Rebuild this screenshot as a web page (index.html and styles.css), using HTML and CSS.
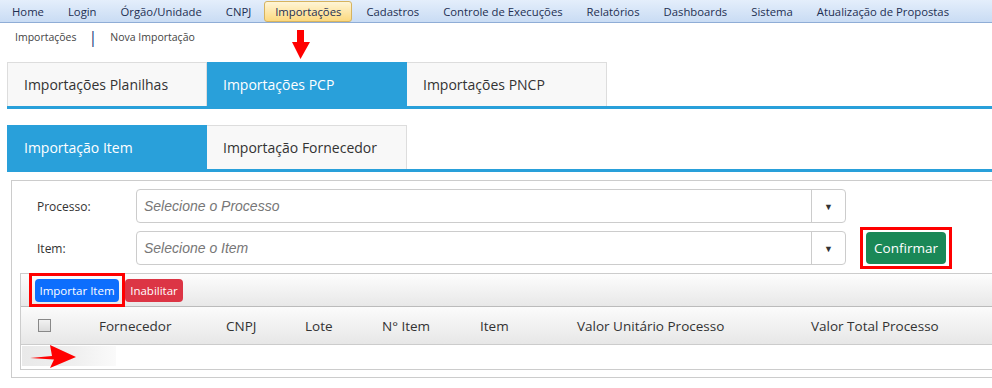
FILE: index.html
```html
<!DOCTYPE html>
<html>
<head>
  <title>Nova Importação</title>
  <link rel="stylesheet" href="styles.css">
</head>
<body>
  <nav class="menu">
    <a href="#">Home</a>
    <a href="#">Login</a>
    <a href="#">Órgão/Unidade</a>
    <a href="#">CNPJ</a>
    <a href="#" class="current">Importações</a>
    <a href="#">Cadastros</a>
    <a href="#">Controle de Execuções</a>
    <a href="#">Relatórios</a>
    <a href="#">Dashboards</a>
    <a href="#">Sistema</a>
    <a href="#">Atualização de Propostas</a>
  </nav>

  <div class="crumbs">
    <span>Importações</span>
    <span class="sep">|</span>
    <span>Nova Importação</span>
  </div>

  <div class="tabs tabs-main">
    <div class="tab">Importações Planilhas</div>
    <div class="tab active">Importações PCP</div>
    <div class="tab">Importações PNCP</div>
  </div>

  <div class="tabs tabs-sub">
    <div class="tab active">Importação Item</div>
    <div class="tab">Importação Fornecedor</div>
  </div>

  <section class="panel">
    <div class="form-row">
      <label>Processo:</label>
      <div class="select">
        <span class="placeholder">Selecione o Processo</span>
        <span class="caret">&#9660;</span>
      </div>
    </div>
    <div class="form-row">
      <label>Item:</label>
      <div class="select">
        <span class="placeholder">Selecione o Item</span>
        <span class="caret">&#9660;</span>
      </div>
      <div class="mark mark-confirm">
        <button class="btn btn-confirm">Confirmar</button>
      </div>
    </div>

    <div class="grid">
      <div class="toolbar">
        <div class="mark mark-import">
          <button class="btn btn-primary">Importar Item</button>
        </div>
        <button class="btn btn-danger">Inabilitar</button>
      </div>
      <div class="grid-head">
        <div class="cell"><span class="check"></span></div>
        <div class="cell">Fornecedor</div>
        <div class="cell">CNPJ</div>
        <div class="cell">Lote</div>
        <div class="cell">N° Item</div>
        <div class="cell">Item</div>
        <div class="cell">Valor Unitário Processo</div>
        <div class="cell">Valor Total Processo</div>
      </div>
      <div class="grid-row">
        <div class="smudge"></div>
      </div>
    </div>
  </section>

  <!-- setas de anotação por cima da tela -->
  <svg class="arrow arrow-down" width="20" height="30" viewBox="0 0 20 30">
    <polygon points="6,0 13,0 13,12 19,12 9.5,29 1,12 6,12" fill="#f00"/>
  </svg>
  <svg class="arrow arrow-right" width="48" height="24" viewBox="0 0 48 24">
    <polygon points="0,13 22,11 20,0 46,12 20,23 24,14.5" fill="#f00"/>
  </svg>
</body>
</html>
```

FILE: styles.css
```css
html, body { margin: 0; padding: 0; overflow: hidden; background: #fff; }
body { font-family: "Open Sans", "Noto Sans", sans-serif; color: #333; position: relative; width: 992px; height: 388px; }

/* menu topo */
.menu { display: flex; align-items: center; height: 22px; border-bottom: 1px solid #8fadd6;
        background: linear-gradient(#e4eefb, #c9dcf4); font-size: 11.3px; }
.menu a { color: #1e2f52; text-decoration: none; padding: 0 12px; line-height: 19px; white-space: nowrap; }
.menu a.current { padding: 0 10px; margin: 0 2px 0 1px; border: 1px solid #d6b35f; border-radius: 3px;
                  background: linear-gradient(#fff5d6, #fcd97f); }

.crumbs { display: flex; align-items: center; height: 27px; padding-left: 15px; font-size: 10.5px; color: #444; }
.crumbs .sep { color: #1f3f80; font-size: 16px; margin: 0 13px 0 12px; line-height: 16px; }

/* abas */
.tabs { display: flex; margin-left: 7px; border-bottom: 3px solid #29a0da; }
.tabs-main { margin-top: 12px; }
.tabs-sub { margin-top: 16px; }
.tab { box-sizing: border-box; width: 200px; height: 44px; padding-left: 16px; display: flex; align-items: center;
       font-size: 14px; color: #333; background: #f8f8f8; border: 1px solid #ddd; border-bottom: none; border-left: none; }
.tab:first-child { border-left: 1px solid #ddd; }
.tab.active { background: #29a0da; color: #fff; border-color: #29a0da; }

/* painel */
.panel { margin: 8px -20px 0 11px; border: 1px solid #ccc; padding: 8px 8px 7px 8px; }
.form-row { display: flex; align-items: center; margin-bottom: 4px; }
.form-row label { width: 99px; padding-left: 17px; font-size: 12px; color: #333; }
.select { box-sizing: border-box; width: 710px; height: 34px; margin: 4px 0; display: flex; align-items: center;
          border: 1px solid #ccc; border-radius: 4px; background: #fff; }
.form-row:first-child .select { margin: 0; }
.placeholder { flex: 1; padding-left: 7px; font-family: "Liberation Sans", Arial, sans-serif; font-style: italic;
               font-size: 14px; color: #777; }
.caret { width: 33px; height: 100%; border-left: 1px solid #ccc; display: flex; align-items: center; justify-content: center;
         font-size: 9px; color: #333; }

.mark { border: 3px solid #f00; padding: 3px; }
.mark-confirm { margin-left: 14px; padding: 2px 3px; }
.btn { font-family: "Open Sans", "Noto Sans", sans-serif; border: none; color: #fff; cursor: pointer; border-radius: 4px; }
.btn-confirm { display: block; width: 80px; height: 32px; background: #1a8857; font-size: 13.5px; padding: 0; }

/* tabela */
.grid { border: 1px solid #ccc; }
.toolbar { display: flex; align-items: center; height: 32px; border-bottom: 1px solid #bbb;
           background: linear-gradient(#fdfdfd, #e8e8e8); }
.mark-import { margin-left: 8px; padding: 3px 3px 2px; }
.btn-primary { display: block; background: #0d6efd; height: 23px; width: 84px; font-size: 11.5px; padding: 0; }
.btn-danger { background: #dc3545; height: 23px; width: 58px; font-size: 11.5px; padding: 0; }
.grid-head { display: grid; grid-template-columns: 78px 127px 79px 77px 98px 97px 234px 1fr; height: 37px;
             align-items: center; border-bottom: 1px solid #ccc; background: linear-gradient(#fbfbfb, #e7e7e7);
             font-size: 13.5px; color: #333; }
.check { display: block; width: 11px; height: 11px; margin-left: 17px; border: 1px solid #888;
         background: linear-gradient(#f2f2f2, #dcdcdc); }
.grid-row { height: 23px; padding: 1px 0 0 1px; }
.smudge { width: 94px; height: 20px; background: linear-gradient(to right, #e9e9e9, #efefef 55%, #fafafa); }

/* setas */
.arrow { position: absolute; }
.arrow-down { left: 291px; top: 30px; }
.arrow-right { left: 30px; top: 345px; }
```
